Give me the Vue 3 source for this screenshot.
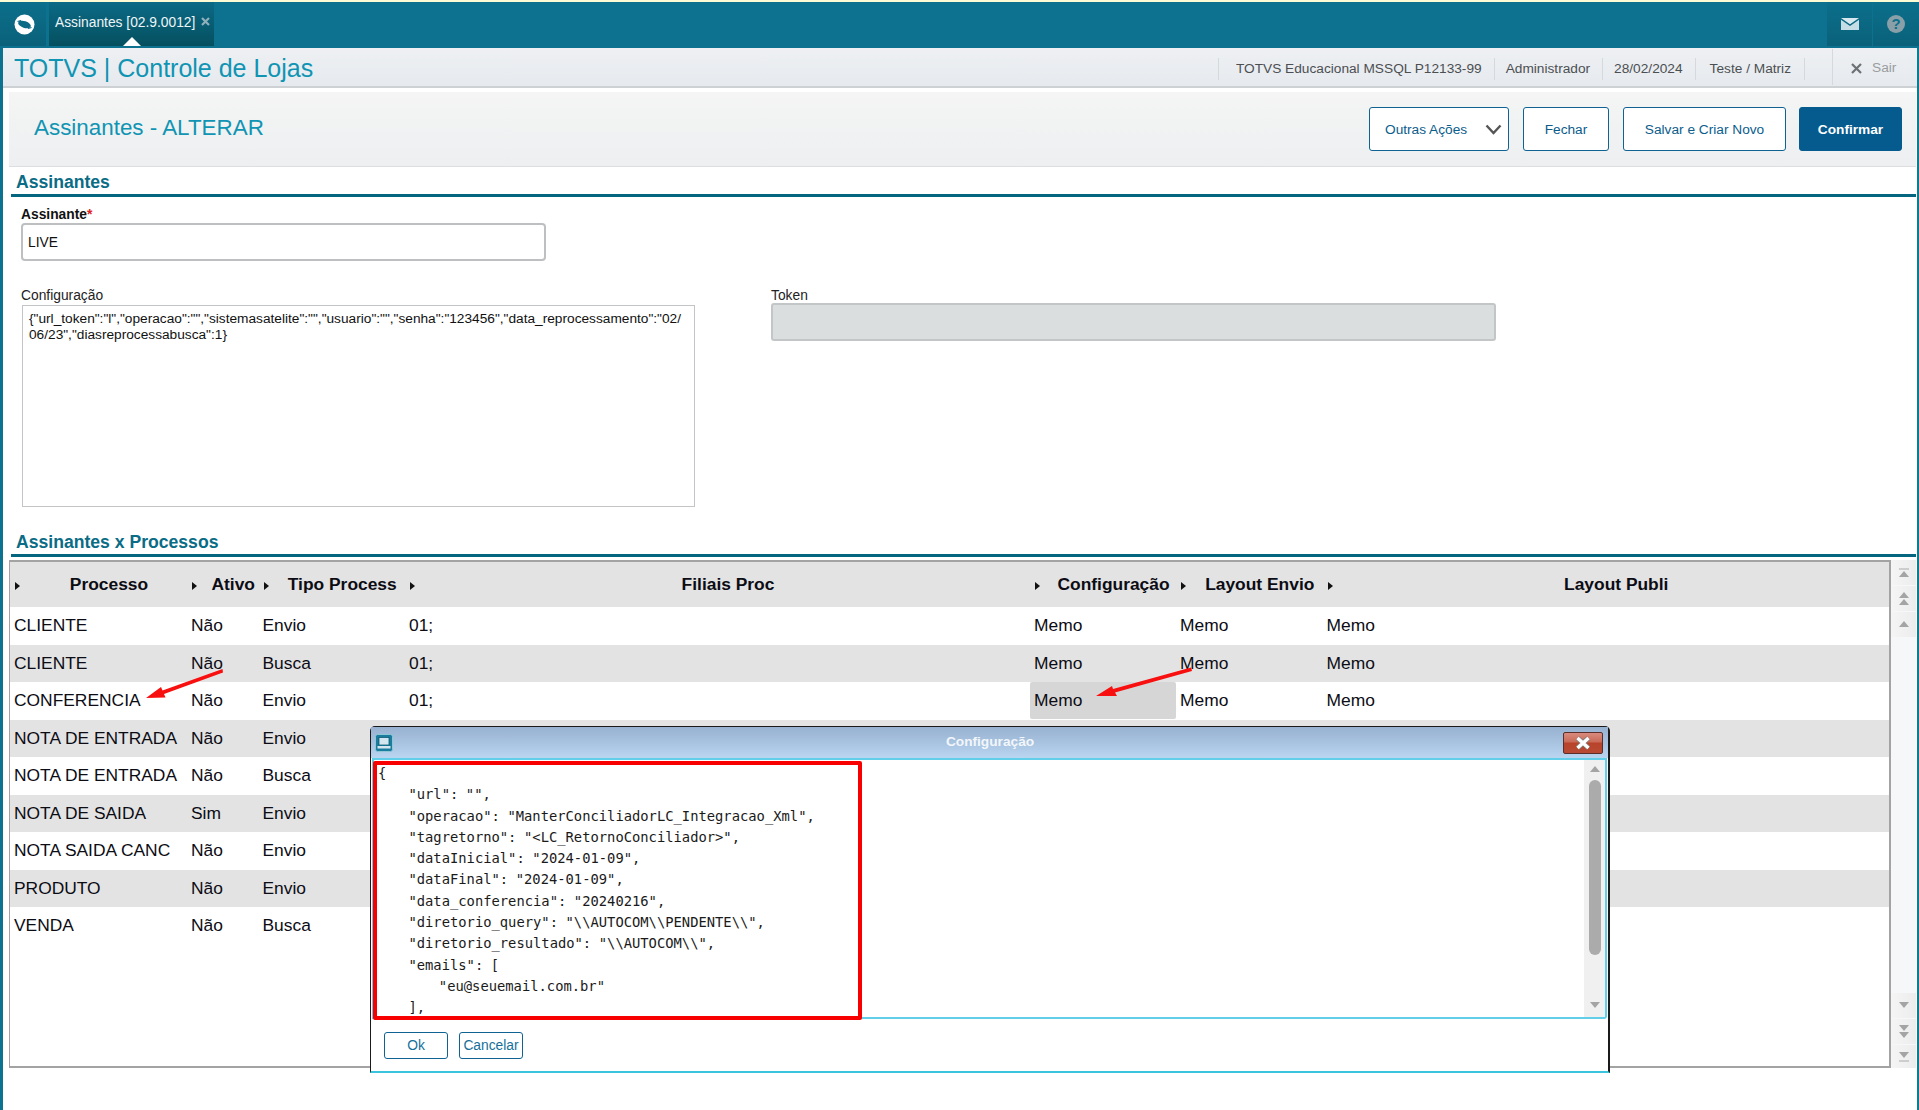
<script setup>
const meta = ['TOTVS Educacional MSSQL P12133-99', 'Administrador', '28/02/2024', 'Teste / Matriz']
const columns = [
  { label: 'Processo' }, { label: 'Ativo' }, { label: 'Tipo Process' }, { label: 'Filiais Proc' },
  { label: 'Configuração' }, { label: 'Layout Envio' }, { label: 'Layout Publi' }
]
const rows = [
  ['CLIENTE', 'Não', 'Envio'],
  ['CLIENTE', 'Não', 'Busca'],
  ['CONFERENCIA', 'Não', 'Envio'],
  ['NOTA DE ENTRADA', 'Não', 'Envio'],
  ['NOTA DE ENTRADA', 'Não', 'Busca'],
  ['NOTA DE SAIDA', 'Sim', 'Envio'],
  ['NOTA SAIDA CANC', 'Não', 'Envio'],
  ['PRODUTO', 'Não', 'Envio'],
  ['VENDA', 'Não', 'Busca']
].map(r => [...r, '01;', 'Memo', 'Memo', 'Memo', ''])
const memo = `{
    "url": "",
    "operacao": "ManterConciliadorLC_Integracao_Xml",
    "tagretorno": "<LC_RetornoConciliador>",
    "dataInicial": "2024-01-09",
    "dataFinal": "2024-01-09",
    "data_conferencia": "20240216",
    "diretorio_query": "\\\\AUTOCOM\\\\PENDENTE\\\\",
    "diretorio_resultado": "\\\\AUTOCOM\\\\",
    "emails": [
        "eu@seuemail.com.br"
    ],`
const cfg = `{"url_token":"l","operacao":"","sistemasatelite":"","usuario":"","senha":"123456","data_reprocessamento":"02/
06/23","diasreprocessabusca":1}`
</script>

<template>
  <div class="page">
    <div class="accent"></div>
    <header class="topbar">
      <div class="logo-cell">
        <svg width="21" height="21" viewBox="0 0 21 21">
          <circle cx="10.500" cy="10.500" r="10" fill="#fff" />
          <ellipse cx="10.500" cy="10.500" rx="6.600" ry="3.400" transform="rotate(18 10.500 10.500)" fill="#0b6a86" />
          <path d="M3.500 7.500l3.500-1M17.500 13.500l-3.500 1" stroke="#0b6a86" stroke-width="1.200" />
        </svg>
      </div>
      <div class="tab">
        <span>Assinantes [02.9.0012]</span>
        <svg class="tab-x" width="9" height="9" viewBox="0 0 9 9"><path d="M1 1l7 7M8 1L1 8" stroke="#8fb0bb" stroke-width="2.200" /></svg>
        <i class="tab-pointer"></i>
      </div>
      <div class="grow"></div>
      <div class="top-icon">
        <svg width="18" height="12" viewBox="0 0 18 12">
          <path d="M0 0h18L9 6.200z" fill="#d8e8ee" />
          <path d="M0 1.800l9 6.300 9-6.300V12H0z" fill="#c6dde6" />
        </svg>
      </div>
      <div class="top-icon help"><b>?</b></div>
    </header>

    <main class="shell">
      <div class="appbar">
        <h1>TOTVS | Controle de Lojas</h1>
        <div class="meta">
          <span v-for="m in meta" :key="m">{{ m }}</span>
          <span class="sair">
            <svg width="11" height="11" viewBox="0 0 11 11"><path d="M1 1l9 9M10 1l-9 9" stroke="#6d7175" stroke-width="2.200" /></svg>
            <em>Sair</em>
          </span>
        </div>
      </div>

      <div class="content">
        <div class="actionbar">
          <h2>Assinantes - ALTERAR</h2>
          <div class="actions">
            <button class="btn outras">Outras Ações
              <svg width="17" height="11" viewBox="0 0 17 11"><path d="M1.500 1.500l7 7.500 7-7.500" fill="none" stroke="#555" stroke-width="2.400" /></svg>
            </button>
            <button class="btn fechar">Fechar</button>
            <button class="btn salvar">Salvar e Criar Novo</button>
            <button class="btn primary">Confirmar</button>
          </div>
        </div>

        <div class="section-head"><span>Assinantes</span></div>
        <div class="form">
          <label class="field-label strong">Assinante<i>*</i></label>
          <div class="input">LIVE</div>
          <div class="config-row">
            <div class="config-col">
              <label class="field-label">Configuração</label>
              <div class="textarea">{{ cfg }}</div>
            </div>
            <div class="token-col">
              <label class="field-label">Token</label>
              <div class="token"></div>
            </div>
          </div>
        </div>

        <div class="section-head second"><span>Assinantes x Processos</span></div>
        <div class="grid-wrap">
          <div class="table">
            <div class="row head">
              <div v-for="c in columns" :key="c.label" class="hcell">
                <i class="tri"></i><span>{{ c.label }}</span>
              </div>
            </div>
            <div v-for="(r, i) in rows" :key="i" class="row">
              <div v-for="(v, j) in r" :key="j" class="cell" :class="{ selected: i === 2 && j === 4 }">{{ v }}</div>
            </div>
          </div>
          <div class="vscroll">
            <button class="sb"><svg width="12" height="10" viewBox="0 0 12 10"><path d="M1 1h10" stroke="#aaa" /><path d="M6 3l5 6H1z" fill="#a4a4a4" /></svg></button>
            <button class="sb"><svg width="12" height="14" viewBox="0 0 12 14"><path d="M6 0l5 6H1zM6 7l5 6H1z" fill="#a4a4a4" /></svg></button>
            <button class="sb"><svg width="12" height="7" viewBox="0 0 12 7"><path d="M6 0l5 6H1z" fill="#a4a4a4" /></svg></button>
            <div class="grow"></div>
            <button class="sb"><svg width="12" height="7" viewBox="0 0 12 7"><path d="M6 6L1 0h10z" fill="#a4a4a4" /></svg></button>
            <button class="sb"><svg width="12" height="14" viewBox="0 0 12 14"><path d="M6 6L1 0h10zM6 13L1 7h10z" fill="#a4a4a4" /></svg></button>
            <button class="sb last"><svg width="12" height="10" viewBox="0 0 12 10"><path d="M6 6L1 0h10z" fill="#a4a4a4" /><path d="M1 9h10" stroke="#aaa" /></svg></button>
          </div>
        </div>
      </div>
    </main>

    <svg class="arrows" width="1919" height="1110" viewBox="0 0 1919 1110">
      <path d="M146 698L161 687l1.500 3.500L222.500 669l.500 3.500L164 694l1.500 3.500z" fill="#f7100f" />
      <path d="M1096 696l16-10 1 3 78-21.500 1 3.500-77 21.500 2 3.500z" fill="#f7100f" />
    </svg>

    <section class="dialog">
      <div class="dlg-title">
        <span class="dlg-icon">
          <svg width="18" height="18" viewBox="0 0 18 18">
            <rect x=".500" y=".500" width="17" height="17" rx="2" fill="#1b7d9d" stroke="#8fc6d8" />
            <rect x="4" y="3.500" width="10" height="7.500" fill="#d3e6ef" stroke="#0d5c75" stroke-width=".800" />
            <rect x="2.500" y="12" width="13" height="2.500" fill="#d3e6ef" />
          </svg>
        </span>
        <span class="dlg-name">Configuração</span>
        <button class="dlg-close">
          <svg width="18" height="14" viewBox="0 0 18 14"><path d="M3.500 2l11 10M14.500 2l-11 10" stroke="#7d7d7d" stroke-width="5" /><path d="M3.500 2l11 10M14.500 2l-11 10" stroke="#fff" stroke-width="3.400" /></svg>
        </button>
      </div>
      <div class="memo">
        <pre class="memo-text">{{ memo }}</pre>
        <div class="memo-scroll">
          <svg width="12" height="7" viewBox="0 0 12 7"><path d="M6 0l5 6H1z" fill="#a4a4a4" /></svg>
          <div class="thumb"></div>
          <svg width="12" height="7" viewBox="0 0 12 7"><path d="M6 6L1 0h10z" fill="#a4a4a4" /></svg>
        </div>
      </div>
      <div class="dlg-foot">
        <button class="dlg-btn">Ok</button>
        <button class="dlg-btn">Cancelar</button>
      </div>
      <div class="highlight"></div>
    </section>
  </div>
</template>

<style scoped>
.page {
  position: relative;
  width: 1919px;
  height: 1110px;
  overflow: hidden;
  display: flex;
  flex-direction: column;
  background: #fff;
  font-family: "Liberation Sans", Arial, sans-serif;
  color: #111;
}
.accent { height: 2px; background: #fdfbd4; flex: none; }
.grow { flex: 1; }
.topbar {
  flex: none;
  height: 46px;
  background: #0c7290;
  display: flex;
}
.logo-cell {
  width: 46px;
  height: 44px;
  padding-left: 3px;
  box-sizing: border-box;
  display: flex;
  align-items: center;
  justify-content: center;
  background: linear-gradient(#0c6f8c, #0a6179);
}
.tab {
  position: relative;
  margin-left: 3px;
  width: 165px;
  height: 44px;
  padding: 0 0 4px 6px;
  box-sizing: border-box;
  display: flex;
  align-items: center;
  gap: 6px;
  color: #eef5f7;
  font-size: 13.800px;
  background: linear-gradient(#0b6a86, #05505f);
}
.tab-x { margin-top: -2px; }
.tab-pointer {
  position: absolute;
  left: 74px;
  bottom: 0;
  width: 0;
  height: 0;
  border-left: 9px solid transparent;
  border-right: 9px solid transparent;
  border-bottom: 9px solid #fff;
}
.top-icon {
  width: 45px;
  height: 44px;
  margin-left: 1px;
  display: flex;
  align-items: center;
  justify-content: center;
  background: linear-gradient(#0c6f8c, #0a6179);
}
.help { width: 46px; }
.help b {
  width: 18px;
  height: 18px;
  border-radius: 50%;
  background: #8aa0a8;
  color: #0c6f8c;
  font-size: 15px;
  line-height: 18px;
  text-align: center;
}
.shell {
  flex: 1;
  min-height: 0;
  display: flex;
  flex-direction: column;
  border-left: 3px solid #0c7290;
  border-right: 2px solid #0c7d90;
}
.appbar {
  flex: none;
  height: 40px;
  box-sizing: border-box;
  display: flex;
  align-items: center;
  justify-content: space-between;
  padding-left: 11px;
  background: linear-gradient(#eef0f3, #e6eaee);
  border-bottom: 2px solid #cdd1d4;
}
h1 {
  margin: 2px 0 0;
  font-size: 25px;
  font-weight: normal;
  color: #0f94b3;
  white-space: nowrap;
}
.meta {
  display: flex;
  align-items: center;
  height: 38px;
  font-size: 13.700px;
  color: #4c4f52;
}
.meta > span {
  height: 22px;
  line-height: 22px;
  margin-top: 4px;
  padding: 0 12px 0 11px;
  border-right: 1px solid #d6d9dc;
}
.meta > span:nth-child(1) { padding-left: 17px; border-left: 1px solid #d6d9dc; }
.meta > span:nth-child(4) { padding: 0 13px 0 14px; }
.meta > span.sair {
  display: flex;
  align-items: center;
  gap: 10px;
  border-right: 0;
  width: 84px;
  height: 36px;
  margin-top: 0;
  box-sizing: border-box;
  padding: 2px 0 0 18px;
  margin-left: 28px;
  box-shadow: -1px 0 0 #d6d9dc;
}
.sair em { font-style: normal; color: #9a9da0; }
.content {
  flex: 1;
  min-height: 0;
  margin: 4px 1px 0 6px;
  display: flex;
  flex-direction: column;
}
.actionbar {
  flex: none;
  height: 75px;
  box-sizing: border-box;
  display: flex;
  align-items: center;
  justify-content: space-between;
  padding: 0 14px 0 25px;
  background: linear-gradient(#f4f5f4, #edeff1);
  border-bottom: 1px solid #dcdedf;
}
h2 {
  margin: 0 0 3px;
  font-size: 22.400px;
  font-weight: normal;
  color: #0f94b3;
}
.actions { display: flex; gap: 14px; }
.btn {
  height: 44px;
  box-sizing: border-box;
  border: 1px solid #0f6291;
  border-radius: 3px;
  background: #fff;
  color: #0b5d8c;
  font: 13.700px "Liberation Sans", Arial, sans-serif;
  padding: 0;
}
.outras {
  width: 140px;
  display: flex;
  align-items: center;
  justify-content: flex-start;
  padding-left: 15px;
  gap: 18px;
}
.fechar { width: 86px; }
.salvar { width: 163px; }
.primary {
  width: 103px;
  margin-left: -1px;
  background: #055a8e;
  border-color: #055a8e;
  color: #fff;
  font-weight: bold;
}
.section-head {
  flex: none;
  height: 30px;
  margin-left: 2px;
  box-sizing: border-box;
  border-bottom: 3px solid #04667f;
  padding: 5px 0 0 5px;
  font-size: 17.600px;
  line-height: 20px;
  font-weight: bold;
  color: #0a6c85;
}
.section-head.second { margin-top: 20px; }
.form { flex: none; padding: 10px 0 0 12px; }
.field-label {
  display: block;
  font-size: 13.800px;
  line-height: 16px;
  height: 16px;
  color: #222;
}
.field-label.strong { font-weight: bold; color: #111; }
.field-label i { color: #e02020; font-style: normal; }
.input {
  width: 525px;
  height: 38px;
  box-sizing: border-box;
  border: 2px solid #bdbfc0;
  border-radius: 4px;
  padding-left: 5px;
  font-size: 13.800px;
  line-height: 35px;
}
.config-row { display: flex; margin-top: 27px; }
.config-col { width: 750px; }
.textarea {
  width: 673px;
  height: 202px;
  box-sizing: border-box;
  margin: 1px 0 0 1px;
  padding: 5px 6px;
  border: 1px solid #c2c4c5;
  font-size: 13.700px;
  line-height: 16px;
  white-space: pre-wrap;
}
.token {
  width: 725px;
  height: 38px;
  box-sizing: border-box;
  margin-top: -1px;
  border: 2px solid #c3c6c7;
  border-radius: 3px;
  background: #dbdedf;
}
.grid-wrap {
  flex: none;
  height: 508px;
  margin-top: 3px;
  display: flex;
}
.table {
  flex: none;
  width: 1882px;
  box-sizing: border-box;
  border: 1px solid #a3a3a3;
  border-width: 2px 2px 2px 1px;
  overflow: hidden;
}
.row {
  display: grid;
  grid-template-columns: 177px 71.500px 146.500px 625px 146px 146.500px 1fr;
  grid-template-rows: 1fr;
  height: 37.500px;
  font-size: 17.400px;
  color: #0c0c14;
}
.row:nth-child(odd):not(.head) { background: #e3e3e3; }
.row.head {
  height: 45px;
  background: #e3e3e3;
  font-weight: bold;
}
.hcell { display: flex; align-items: center; }
.hcell span { flex: 1; text-align: center; white-space: nowrap; }
.tri {
  flex: none;
  width: 0;
  height: 0;
  margin: 2px 11px 0 5px;
  border-top: 4.500px solid transparent;
  border-bottom: 4.500px solid transparent;
  border-left: 5px solid #111;
}
.cell {
  display: flex;
  align-items: center;
  padding: 1px 0 0 4px;
  white-space: nowrap;
}
.cell.selected { background: #d6d6d6; border-radius: 2px; }
.vscroll {
  flex: 1;
  display: flex;
  flex-direction: column;
  background: #f6f7f9;
}
.sb {
  flex: none;
  height: 25px;
  margin-bottom: 1px;
  padding: 0;
  border: 0;
  background: linear-gradient(90deg, #f5f5f5, #ececec);
  display: flex;
  align-items: center;
  justify-content: center;
}
.sb.last { height: 23px; margin-bottom: 0; }
.arrows {
  position: absolute;
  left: 0;
  top: 0;
  pointer-events: none;
}
.dialog {
  position: absolute;
  left: 370px;
  top: 726px;
  width: 1240px;
  height: 347px;
  box-sizing: border-box;
  display: flex;
  flex-direction: column;
  background: #fff;
  border: 1px solid #1a1a1a;
  border-width: 1.500px 2px 0 1px;
  border-bottom: 2px solid #3cc4dc;
  border-radius: 5px 5px 0 0;
}
.dlg-title {
  flex: none;
  height: 31px;
  display: flex;
  align-items: center;
  padding: 0 5px 0 4px;
  background: linear-gradient(#97b1d0, #b9d5f0);
}
.dlg-icon { display: flex; }
.dlg-name {
  flex: 1;
  padding: 0 0 3px 24px;
  text-align: center;
  color: #f2f6fa;
  font-size: 13.700px;
  font-weight: bold;
}
.dlg-close {
  width: 40px;
  height: 22px;
  padding: 0;
  border: 1px solid #5a2f2a;
  border-radius: 2px;
  background: linear-gradient(#d98b7e 0%, #c96a58 45%, #b8432a 50%, #b84a34 100%);
  display: flex;
  align-items: center;
  justify-content: center;
}
.memo {
  flex: none;
  height: 261px;
  box-sizing: border-box;
  margin-left: 1px;
  margin-right: 1px;
  border: 2px solid #62cfea;
  border-radius: 0 0 3px 0;
  display: flex;
  overflow: hidden;
}
.memo-text {
  flex: 1;
  margin: 0;
  padding: 3px 0 0 4px;
  font-family: "DejaVu Sans Mono", monospace;
  font-size: 13.800px;
  line-height: 21.300px;
  word-spacing: -0.700px;
  color: #1a1a1a;
  overflow: hidden;
}
.memo-scroll {
  flex: none;
  width: 21px;
  background: #f0f0f0;
  display: flex;
  flex-direction: column;
  align-items: center;
  padding: 6px 0 8px;
  box-sizing: border-box;
}
.thumb {
  width: 12px;
  height: 175px;
  margin: 7px 0 auto;
  border-radius: 6px;
  background: #ababab;
}
.dlg-foot {
  flex: 1;
  display: flex;
  align-items: flex-start;
  gap: 11px;
  padding: 13px 0 0 13px;
}
.dlg-btn {
  width: 64px;
  height: 27px;
  padding: 0;
  border: 1px solid #0f6291;
  border-radius: 3px;
  background: #fff;
  color: #166f9a;
  font: 13.800px "Liberation Sans", Arial, sans-serif;
  white-space: nowrap;
}
.highlight {
  position: absolute;
  left: 2px;
  top: 34px;
  width: 489px;
  height: 259px;
  box-sizing: border-box;
  border: 4px solid #f80000;
  border-radius: 2px;
}
</style>
